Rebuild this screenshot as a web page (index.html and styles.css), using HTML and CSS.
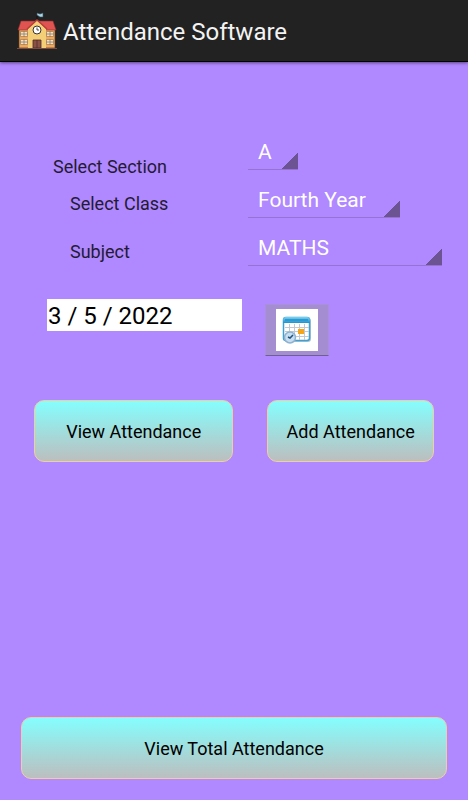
FILE: index.html
```html
<!DOCTYPE html>
<html lang="en">
<head>
  <meta charset="UTF-8">
  <meta name="viewport" content="width=device-width, initial-scale=1.0">
  <title>Attendance Software</title>
  <link rel="stylesheet" href="styles.css">
</head>
<body>
  <header>
    <svg class="logo" viewBox="0 0 40 38" aria-hidden="true">
      <path d="M20 1l3 1 3-1v4l-3 0-3-2z" fill="#a9d3e6" stroke="#39505c" stroke-width=".6"/>
      <path d="M20 4v5" stroke="#111" stroke-width="1"/>
      <path d="M2 17h36v19H2z" fill="#f0a95c" stroke="#5b3a25" stroke-width=".7"/>
      <path d="M4 9h32l3 9H1z" fill="#df5350" stroke="#8d2f30" stroke-width=".6"/>
      <path d="M11 17l9-9 9 9v19H11z" fill="#f5cf78"/>
      <path d="M10 17L20 8l10 9" fill="none" stroke="#b83e3d" stroke-width="1.500"/>
      <path d="M3.500 19.500h7v5h-7zM3.500 27.500h7v5h-7zM29.500 19.500h7v5h-7zM29.500 27.500h7v5h-7z" fill="#e6e2d6" stroke="#a57948" stroke-width=".7"/>
      <path d="M7 19v6M7 27v6M33 19v6M33 27v6M3 22h8M3 30h8M29 22h8M29 30h8" stroke="#a57948" stroke-width=".8"/>
      <circle cx="20" cy="18" r="4" fill="#fff" stroke="#3b3530" stroke-width="1"/>
      <path d="M20 15.500V18h2" fill="none" stroke="#222" stroke-width=".8"/>
      <path d="M16 28h8v8h-8z" fill="#8a5145" stroke="#4c2a25" stroke-width=".8"/>
      <path d="M20 28v8" stroke="#4c2a25" stroke-width=".7"/>
      <path d="M0 36.500h40" stroke="#7d4b40" stroke-width="1"/>
    </svg>
    <h1>Attendance Software</h1>
  </header>

  <main>
    <div class="field">
      <label class="low" for="section">Select Section</label>
      <select id="section" class="section">
        <option>A</option>
        <option>B</option>
        <option>C</option>
      </select>
    </div>
    <div class="field">
      <label for="year">Select Class</label>
      <select id="year" class="year">
        <option>First Year</option>
        <option>Second Year</option>
        <option>Third Year</option>
        <option selected>Fourth Year</option>
      </select>
    </div>
    <div class="field">
      <label for="subject">Subject</label>
      <select id="subject" class="subject">
        <option>MATHS</option>
        <option>PHYSICS</option>
      </select>
    </div>

    <div class="date-row">
      <input type="text" id="date" value="3 / 5 / 2022" aria-label="Date">
      <button type="button" class="pick-date" aria-label="Pick date">
        <svg viewBox="0 0 42 42" aria-hidden="true">
          <defs>
            <linearGradient id="bar" x1="0" y1="0" x2="0" y2="1">
              <stop offset="0" stop-color="#7fd0ee"/>
              <stop offset="1" stop-color="#1e92cc"/>
            </linearGradient>
          </defs>
          <rect width="42" height="42" fill="#fff"/>
          <rect x="8" y="9" width="27" height="24" rx="3" fill="#8b9aa8" opacity=".6"/>
          <rect x="7.500" y="8.500" width="26" height="23" rx="2.500" fill="#fff" stroke="#3ba0d4" stroke-width="1.500"/>
          <path d="M7 14v-3q0-3 3-3h21q3 0 3 3v3z" fill="url(#bar)"/>
          <path d="M9 11h23" stroke="#2a9bd2" stroke-width="2"/>
          <path d="M9 18.500h24M9 22.500h24M9 27.500h24M13.500 15v16M18.500 15v16M23.500 15v16M28.500 15v16" stroke="#c3c9d0" stroke-width="1"/>
          <rect x="22" y="20" width="6" height="5" fill="#f5a51b"/>
          <circle cx="14" cy="28.500" r="5.500" fill="#c7dff1" stroke="#8fb2d0" stroke-width="1.500"/>
          <path d="M12 28l2 1 3-3" fill="none" stroke="#234f7d" stroke-width="1.500"/>
        </svg>
      </button>
    </div>

    <div class="button-container">
      <button type="button" class="btn view">View Attendance</button>
      <button type="button" class="btn add">Add Attendance</button>
    </div>
  </main>

  <footer>
    <button type="button" class="btn total">View Total Attendance</button>
  </footer>
</body>
</html>
```
FILE: styles.css
```css
* {
  box-sizing: border-box;
}

body {
  margin: 0;
  min-height: 100vh;
  display: flex;
  flex-direction: column;
  font-family: Roboto, sans-serif;
  background-color: #b088ff;
  color: black;
}

header {
  display: flex;
  align-items: center;
  gap: 6px;
  height: 62px;
  padding: 0 17px;
  background-color: #222;
  border-bottom: 1px solid #000;
  box-shadow: 0 1px 3px rgba(0, 0, 0, 0.5);
}

.logo {
  width: 40px;
  height: 38px;
}

h1 {
  margin: 0;
  padding-top: 2px;
  font-size: 24px;
  font-weight: 400;
  color: #f3f3f3;
}

main {
  flex: 1;
  padding-top: 71px;
}

/* Spinner rows */
.field {
  display: grid;
  grid-template-columns: 53% 1fr;
  margin-bottom: 11px;
}

.field label {
  align-self: center;
  padding: 8px 0 0 70px;
  font-size: 18px;
  line-height: 20px;
  color: #241b33;
}

.field label.low {
  align-self: end;
  padding: 0 0 0 53px;
  margin-bottom: -7px;
}

.field select {
  appearance: none;
  height: 37px;
  padding: 1px 10px 0;
  font-family: inherit;
  font-size: 21px;
  color: white;
  border: none;
  border-bottom: 1px solid #9474d0;
  border-radius: 0;
  background: linear-gradient(135deg, transparent 50%, #6b5491 50%) right bottom / 16px 16px no-repeat;
}

.field option {
  color: black;
}

.section {
  width: 50px;
}

.year {
  width: 152px;
}

.subject {
  width: 194px;
}

/* Date */
.date-row {
  display: flex;
  align-items: flex-start;
  gap: 23px;
  padding: 22px 47px 0;
}

.date-row input {
  width: 195px;
  height: 32px;
  padding: 2px 0 0 1px;
  font-family: inherit;
  font-size: 24px;
  color: black;
  background-color: white;
  border: none;
}

.pick-date {
  display: flex;
  margin-top: 5px;
  padding: 4px 10px;
  background-color: #a48dd0;
  border: 1px solid #aa8fdd;
  border-bottom: 1px solid #6f5f92;
  border-radius: 1px;
  cursor: pointer;
}

.pick-date svg {
  width: 42px;
  height: 42px;
}

/* Buttons */
.button-container {
  display: flex;
  gap: 34px;
  padding: 44px 34px 0;
}

.btn {
  height: 62px;
  padding: 1px 0 0;
  font-family: inherit;
  font-size: 18px;
  color: black;
  background: linear-gradient(#84ffff, #bdbdbd) border-box;
  border: 1px solid #f0cf9c;
  border-radius: 10px;
  cursor: pointer;
}

.view {
  flex: 6;
}

.add {
  flex: 5;
}

footer {
  padding: 0 21px 21px;
}

.total {
  width: 100%;
}
```
